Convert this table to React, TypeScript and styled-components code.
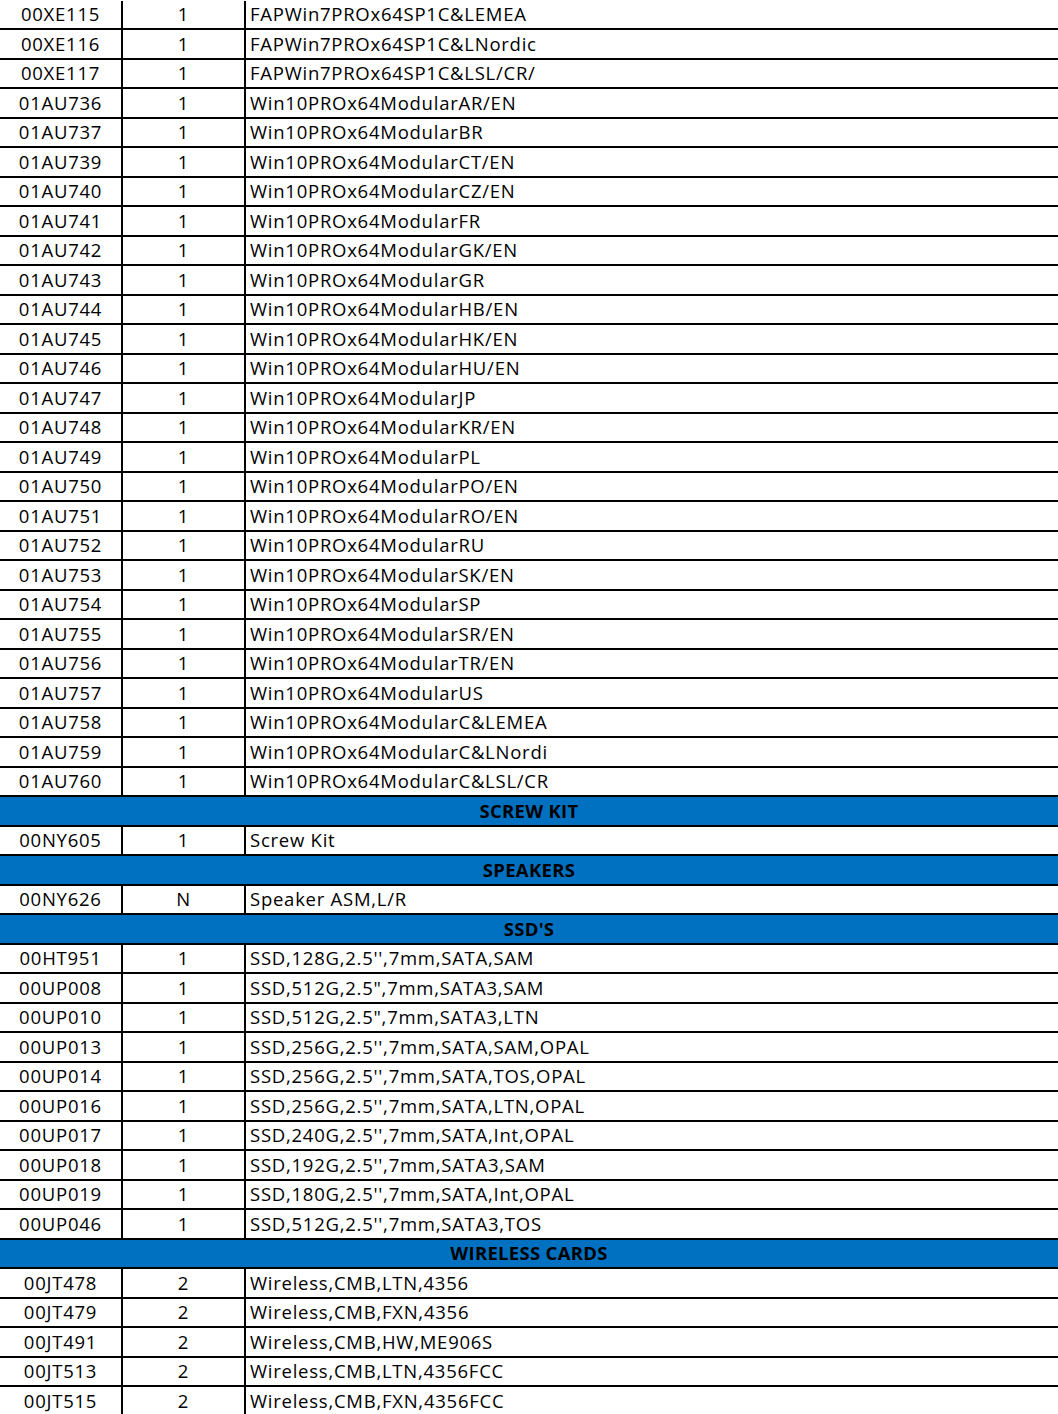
import React from "react";
import styled, { createGlobalStyle } from "styled-components";

type Item = { part: string; qty: string; desc: string };
type Section = { title?: string; items: Item[] };

const win10 = (part: string, suffix: string): Item => ({
  part,
  qty: "1",
  desc: "Win10PROx64Modular" + suffix,
});

const ssd = (part: string, desc: string): Item => ({ part, qty: "1", desc });
const wifi = (part: string, desc: string): Item => ({ part, qty: "2", desc });

const sections: Section[] = [
  {
    items: [
      { part: "00XE115", qty: "1", desc: "FAPWin7PROx64SP1C&LEMEA" },
      { part: "00XE116", qty: "1", desc: "FAPWin7PROx64SP1C&LNordic" },
      { part: "00XE117", qty: "1", desc: "FAPWin7PROx64SP1C&LSL/CR/" },
      win10("01AU736", "AR/EN"),
      win10("01AU737", "BR"),
      win10("01AU739", "CT/EN"),
      win10("01AU740", "CZ/EN"),
      win10("01AU741", "FR"),
      win10("01AU742", "GK/EN"),
      win10("01AU743", "GR"),
      win10("01AU744", "HB/EN"),
      win10("01AU745", "HK/EN"),
      win10("01AU746", "HU/EN"),
      win10("01AU747", "JP"),
      win10("01AU748", "KR/EN"),
      win10("01AU749", "PL"),
      win10("01AU750", "PO/EN"),
      win10("01AU751", "RO/EN"),
      win10("01AU752", "RU"),
      win10("01AU753", "SK/EN"),
      win10("01AU754", "SP"),
      win10("01AU755", "SR/EN"),
      win10("01AU756", "TR/EN"),
      win10("01AU757", "US"),
      win10("01AU758", "C&LEMEA"),
      win10("01AU759", "C&LNordi"),
      win10("01AU760", "C&LSL/CR"),
    ],
  },
  {
    title: "SCREW KIT",
    items: [{ part: "00NY605", qty: "1", desc: "Screw Kit" }],
  },
  {
    title: "SPEAKERS",
    items: [{ part: "00NY626", qty: "N", desc: "Speaker ASM,L/R" }],
  },
  {
    title: "SSD'S",
    items: [
      ssd("00HT951", "SSD,128G,2.5'',7mm,SATA,SAM"),
      ssd("00UP008", 'SSD,512G,2.5",7mm,SATA3,SAM'),
      ssd("00UP010", 'SSD,512G,2.5",7mm,SATA3,LTN'),
      ssd("00UP013", "SSD,256G,2.5'',7mm,SATA,SAM,OPAL"),
      ssd("00UP014", "SSD,256G,2.5'',7mm,SATA,TOS,OPAL"),
      ssd("00UP016", "SSD,256G,2.5'',7mm,SATA,LTN,OPAL"),
      ssd("00UP017", "SSD,240G,2.5'',7mm,SATA,Int,OPAL"),
      ssd("00UP018", "SSD,192G,2.5'',7mm,SATA3,SAM"),
      ssd("00UP019", "SSD,180G,2.5'',7mm,SATA,Int,OPAL"),
      ssd("00UP046", "SSD,512G,2.5'',7mm,SATA3,TOS"),
    ],
  },
  {
    title: "WIRELESS CARDS",
    items: [
      wifi("00JT478", "Wireless,CMB,LTN,4356"),
      wifi("00JT479", "Wireless,CMB,FXN,4356"),
      wifi("00JT491", "Wireless,CMB,HW,ME906S"),
      wifi("00JT513", "Wireless,CMB,LTN,4356FCC"),
      wifi("00JT515", "Wireless,CMB,FXN,4356FCC"),
    ],
  },
];

const GlobalStyle = createGlobalStyle`
  html, body {
    margin: 0;
    padding: 0;
    background: #ffffff;
    overflow: hidden;
  }
`;

const Sheet = styled.div`
  width: 1058px;
  padding-top: 0.5px;
  font-family: "Open Sans", "Liberation Sans", sans-serif;
  font-size: 18.5px;
  letter-spacing: 0.75px;
  color: #000000;
`;

const Row = styled.div`
  display: grid;
  grid-template-columns: 123px 123px 1fr;
  height: 27.5px;
  border-bottom: 2px solid #000000;
`;

const Cell = styled.div<{ $align?: "left" | "center" }>`
  display: flex;
  align-items: center;
  justify-content: ${(p) => (p.$align === "left" ? "flex-start" : "center")};
  padding-left: ${(p) => (p.$align === "left" ? "4px" : "0")};
  padding-bottom: 1px;
  white-space: nowrap;
  overflow: hidden;
`;

const CodeCell = styled(Cell)`
  border-right: 2px solid #000000;
`;

const QtyCell = styled(Cell)`
  border-right: 2px solid #000000;
`;

const Heading = styled.div`
  display: flex;
  align-items: center;
  justify-content: center;
  height: 26.5px;
  padding-bottom: 1px;
  background: #0070c0;
  border-bottom: 2px solid #000000;
  font-weight: 700;
  letter-spacing: 0.3px;
`;

const App = () => {
  return (
    <>
      <GlobalStyle />
      <Sheet>
        {sections.map((section, i) => (
          <React.Fragment key={i}>
            {section.title && <Heading>{section.title}</Heading>}
            {section.items.map((item) => (
              <Row key={item.part}>
                <CodeCell>{item.part}</CodeCell>
                <QtyCell>{item.qty}</QtyCell>
                <Cell $align="left">{item.desc}</Cell>
              </Row>
            ))}
          </React.Fragment>
        ))}
      </Sheet>
    </>
  );
};

export default App;
